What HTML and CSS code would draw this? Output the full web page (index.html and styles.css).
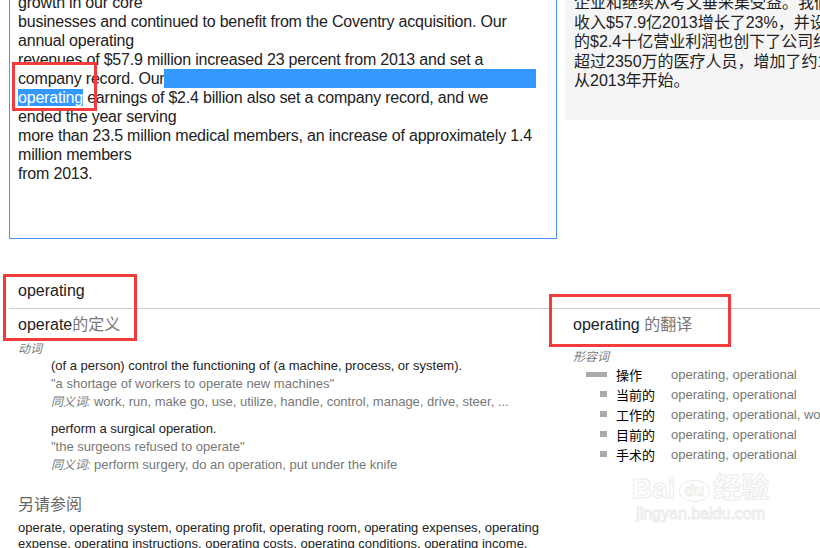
FILE: index.html
```html
<!DOCTYPE html>
<html lang="zh-CN">
<head>
    <meta charset="utf-8" />
    <meta name="viewport" content="width=device-width, initial-scale=1.0" />
    <link rel="stylesheet" href="styles.css">
</head>
<body>
    <div class="page">
        <div class="top">
            <div class="source">
                <div class="line">growth in our core</div>
                <div class="line">businesses and continued to benefit from the Coventry acquisition. Our</div>
                <div class="line">annual operating</div>
                <div class="line">revenues of $57.9 million increased 23 percent from 2013 and set a</div>
                <div class="line">company record. Our<span class="sel sel-tail"></span></div>
                <div class="line"><span class="sel">operating</span> earnings of $2.4 billion also set a company record, and we</div>
                <div class="line">ended the year serving</div>
                <div class="line">more than 23.5 million medical members, an increase of approximately 1.4</div>
                <div class="line">million members</div>
                <div class="line">from 2013.</div>
            </div>
            <div class="result">
                <div class="line">企业和继续从考文垂采集受益。我们</div>
                <div class="line">收入$57.9亿2013增长了23%，并设定</div>
                <div class="line">的$2.4十亿营业利润也创下了公司纪录</div>
                <div class="line">超过2350万的医疗人员，增加了约140万</div>
                <div class="line">从2013年开始。</div>
            </div>
        </div>

        <div class="dict">
            <div class="dict-head">operating</div>
            <div class="dict-cols">
                <div class="def-col">
                    <div class="col-title">operate<span class="muted">的定义</span></div>
                    <div class="pos">动词</div>
                    <div class="gloss">
                        <div class="gloss-def">(of a person) control the functioning of (a machine, process, or system).</div>
                        <div class="gloss-ex">"a shortage of workers to operate new machines"</div>
                        <div class="gloss-syn"><i>同义词:</i> work, run, make go, use, utilize, handle, control, manage, drive, steer, ...</div>
                    </div>
                    <div class="gloss">
                        <div class="gloss-def">perform a surgical operation.</div>
                        <div class="gloss-ex">"the surgeons refused to operate"</div>
                        <div class="gloss-syn"><i>同义词:</i> perform surgery, do an operation, put under the knife</div>
                    </div>
                    <div class="see-title">另请参阅</div>
                    <div class="see-list">operate, operating system, operating profit, operating room, operating expenses, operating expense, operating instructions, operating costs, operating conditions, operating income, operating table</div>
                </div>
                <div class="trans-col">
                    <div class="col-title">operating <span class="muted">的翻译</span></div>
                    <div class="pos">形容词</div>
                    <div class="trans-row">
                        <span class="freq"><span class="bar bar-wide"></span></span>
                        <span class="word">操作</span>
                        <span class="alts">operating, operational</span>
                    </div>
                    <div class="trans-row">
                        <span class="freq"><span class="bar"></span></span>
                        <span class="word">当前的</span>
                        <span class="alts">operating, operational</span>
                    </div>
                    <div class="trans-row">
                        <span class="freq"><span class="bar"></span></span>
                        <span class="word">工作的</span>
                        <span class="alts">operating, operational, working</span>
                    </div>
                    <div class="trans-row">
                        <span class="freq"><span class="bar"></span></span>
                        <span class="word">目前的</span>
                        <span class="alts">operating, operational</span>
                    </div>
                    <div class="trans-row">
                        <span class="freq"><span class="bar"></span></span>
                        <span class="word">手术的</span>
                        <span class="alts">operating, operational</span>
                    </div>
                </div>
            </div>
        </div>

        <!-- red annotation boxes -->
        <div class="mark mark-src"></div>
        <div class="mark mark-head"></div>
        <div class="mark mark-trans"></div>

        <div class="watermark">
            <div class="wm-logo">Bai<span class="wm-paw">du</span>经验</div>
            <div class="wm-url">jingyan.baidu.com</div>
        </div>
    </div>
</body>
</html>
```

FILE: styles.css
```css
:root {
    --text: #222;
    --muted: #777;
    --rule: #ccc;
    --focus: #4d90fe;
    --select: #3399ff;
    --panel: #f5f5f5;
    --mark: #f23b3b;
    --latin: 'Liberation Sans', Arial, 'Noto Sans CJK SC', sans-serif;
}

html, body {
    margin: 0;
    height: 100%;
    overflow: hidden;
    background: #fff;
}

body {
    font-family: var(--latin);
    color: var(--text);
}

.page {
    position: relative;
    width: 820px;
    height: 548px;
    overflow: hidden;
}

/* top: source box + translation panel */
.top {
    display: flex;
    gap: 8px;
    margin-top: -17px;
    padding-left: 9px;
}

.source {
    flex: 0 0 548px;
    box-sizing: border-box;
    height: 256px;
    padding: 9px 8px 8px;
    border: 1px solid var(--focus);
    font-size: 16px;
    line-height: 19px;
    letter-spacing: -0.2px;
    white-space: nowrap;
}

.sel {
    background: var(--select);
    color: #fff;
}

.sel-tail {
    display: inline-block;
    width: 372px;
    height: 19px;
    vertical-align: top;
}

.result {
    flex: 0 0 300px;
    height: 137px;
    box-sizing: border-box;
    padding: 10px 9px 8px;
    background: var(--panel);
    font-size: 16px;
    line-height: 19.5px;
    white-space: nowrap;
    overflow: hidden;
}

/* dictionary */
.dict {
    margin-top: 42px;
}

.dict-head {
    font-size: 16px;
    line-height: 19px;
    margin-left: 9px;
    padding: 0 0 8px 9px;
    border-bottom: 1px solid var(--rule);
}

.dict-cols {
    display: flex;
}

.def-col {
    flex: 0 0 531px;
    padding-left: 18px;
    padding-top: 6px;
}

.trans-col {
    flex: 1;
    padding-left: 24px;
    padding-top: 6px;
    white-space: nowrap;
}

.col-title {
    font-size: 16px;
    line-height: 19px;
}

.muted {
    color: var(--muted);
}

.pos {
    font-size: 12px;
    line-height: 16px;
    font-style: italic;
    color: var(--muted);
    margin-top: 7px;
}

.trans-col .pos {
    margin-top: 15px;
    margin-bottom: -1px;
}

.gloss {
    padding-left: 33px;
    font-size: 13px;
    line-height: 18px;
    margin-bottom: 9px;
}

.gloss-ex,
.gloss-syn {
    color: var(--muted);
}

.gloss-syn i {
    font-size: 12px;
}

.see-title {
    margin-top: 21px;
    font-size: 16px;
    line-height: 19px;
    color: #666;
}

.see-list {
    margin-top: 6px;
    font-size: 13px;
    line-height: 16px;
}

.trans-row {
    display: flex;
    align-items: center;
    height: 20px;
    font-size: 13px;
}

.freq {
    display: flex;
    justify-content: flex-end;
    width: 34px;
    margin-right: 9px;
}

.bar {
    display: block;
    width: 7px;
    height: 6px;
    background: #aaa;
}

.bar-wide {
    width: 21px;
    height: 5px;
}

.word {
    width: 55px;
    color: #000;
}

.alts {
    color: var(--muted);
}

/* annotation boxes drawn over the screenshot */
.mark {
    position: absolute;
    border: 3px solid var(--mark);
    box-sizing: border-box;
}

.mark-src {
    left: 12px;
    top: 62px;
    width: 85px;
    height: 49px;
}

.mark-head {
    left: 3px;
    top: 274px;
    width: 134px;
    height: 67px;
}

.mark-trans {
    left: 549px;
    top: 294px;
    width: 182px;
    height: 53px;
}

.watermark {
    position: absolute;
    left: 632px;
    top: 474px;
    text-align: center;
    color: transparent;
    -webkit-text-stroke: 1px #ebebeb;
    font-weight: bold;
}

.wm-logo {
    font-size: 28px;
    line-height: 30px;
}

.wm-paw {
    display: inline-block;
    font-size: 16px;
    line-height: 20px;
    padding: 0 5px;
    border: 1px solid #ebebeb;
    border-radius: 50%;
    vertical-align: middle;
    margin: 0 3px;
}

.wm-url {
    font-size: 16px;
    font-weight: normal;
    line-height: 20px;
}
```
